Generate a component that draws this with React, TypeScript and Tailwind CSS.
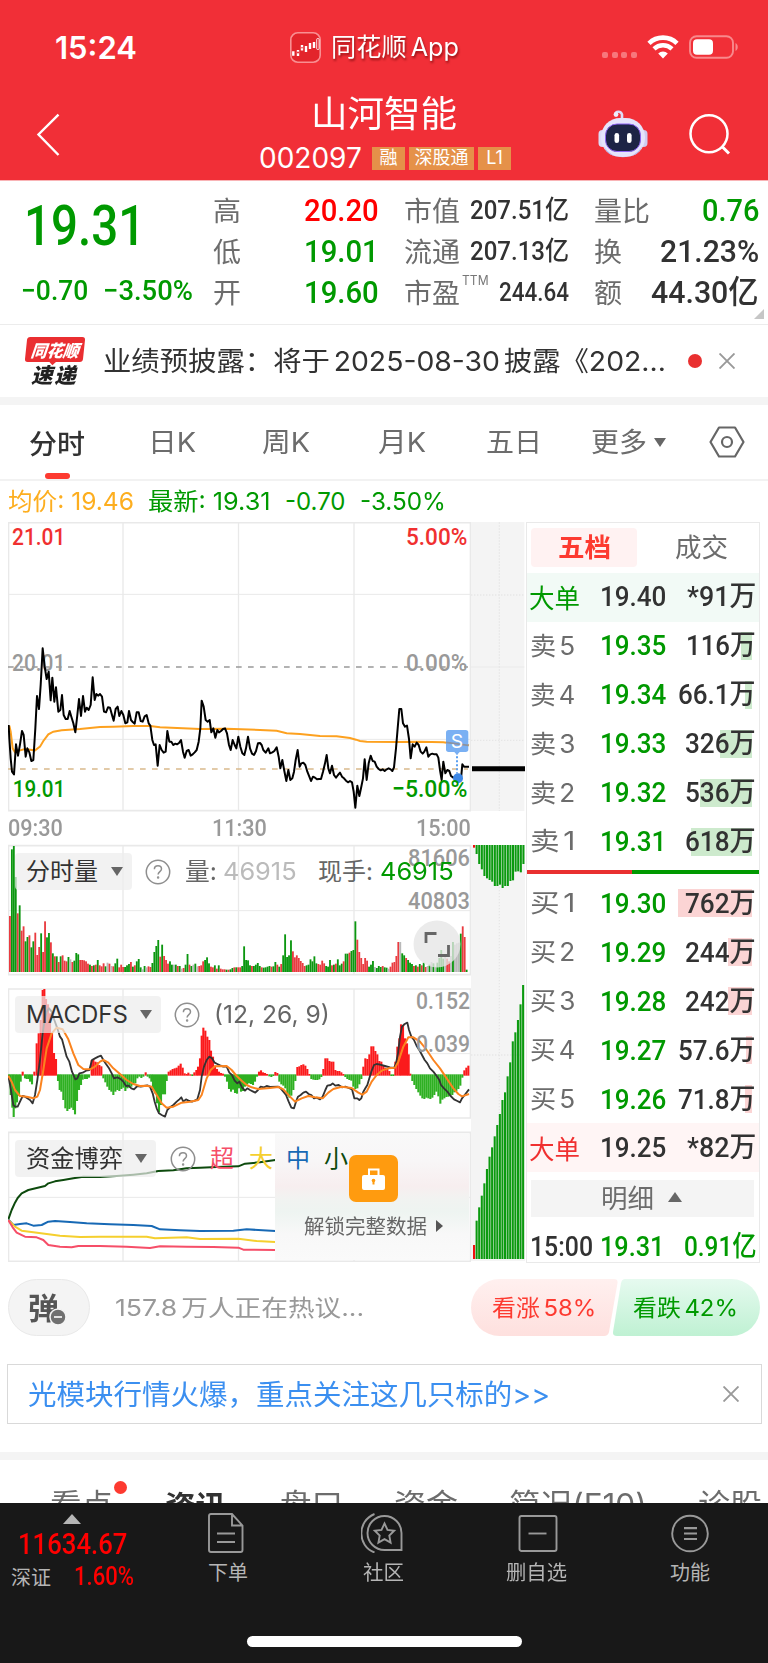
import { useLayoutEffect, useRef, type ReactNode } from 'react';

/* Text stretched or squeezed horizontally to the width of its box. */
function Fit({ className = '', children }: { className?: string; children: ReactNode }) {
  const outer = useRef<HTMLSpanElement>(null);
  const inner = useRef<HTMLSpanElement>(null);
  useLayoutEffect(() => {
    if (!outer.current || !inner.current) return;
    const ratio = outer.current.clientWidth / inner.current.offsetWidth;
    inner.current.style.transform = `scaleX(${ratio})`;
  }, []);
  return (
    <span ref={outer} className={'block shrink-0 whitespace-nowrap leading-none ' + className}>
      <span ref={inner} className="inline-block origin-left whitespace-pre">{children}</span>
    </span>
  );
}

const DIN = "font-['Roboto','Noto_Sans_CJK_SC',sans-serif] font-medium ";

const PRICE =
  '26,630 28,670 32,730 36,770 42,778 48,688 54,722 60,688 66,648 71,660 77,725 82,700 88,712 94,738 100,735 106,640 111,543 117,582 122,510 128,400 134,455 140,492 146,470 152,556 157,488 163,560 168,517 175,590 181,585 186,540 191,600 197,612 203,612 209,588 214,605 220,625 226,652 232,600 237,552 243,603 249,543 255,590 260,578 266,585 272,570 278,487 284,555 289,537 295,542 300,537 306,545 312,590 318,592 324,577 330,578 336,600 341,617 347,582 353,575 358,603 364,588 370,600 376,625 382,622 387,588 393,615 399,622 404,626 410,592 416,592 422,618 428,620 434,604 440,600 446,625 451,632 457,675 462,690 467,688 473,752 479,690 485,705 491,713 497,710 502,648 508,680 514,680 520,690 526,686 531,688 537,684 543,675 549,710 554,728 560,708 566,705 572,722 578,718 584,712 590,705 596,680 601,640 605,557 611,575 617,615 623,620 629,615 634,652 640,640 646,668 652,645 657,652 663,648 669,642 675,640 681,655 687,690 692,705 698,675 704,690 709,700 715,665 721,695 727,715 733,720 738,700 744,665 750,700 756,716 762,720 768,708 774,685 780,684 785,690 790,705 797,713 805,700 810,715 817,712 823,708 830,697 836,725 841,760 847,735 853,768 859,798 865,765 871,795 877,790 882,770 887,735 893,705 899,755 904,745 910,743 916,750 922,770 928,785 933,798 939,785 945,788 951,793 957,792 963,792 969,770 975,745 980,720 985,760 990,775 996,752 1002,780 1008,788 1014,780 1020,773 1026,785 1032,790 1038,797 1044,802 1050,798 1056,802 1061,830 1066,878 1072,812 1078,843 1083,820 1089,790 1094,733 1100,795 1106,745 1112,722 1118,738 1124,740 1130,755 1136,762 1142,766 1148,763 1154,768 1160,763 1166,760 1172,763 1177,768 1182,757 1188,700 1193,640 1198,582 1204,582 1209,625 1215,635 1221,632 1227,672 1232,730 1238,688 1244,695 1250,683 1256,690 1262,710 1268,716 1273,710 1279,697 1285,725 1291,718 1297,716 1303,718 1310,718 1315,728 1320,765 1325,795 1330,740 1336,775 1342,765 1348,768 1353,783 1360,788 1366,787 1375,790 1383,792 1387,748 1392,755 1400,755 1407,755';
const AVERAGE =
  '28,632 32,650 38,700 45,712 60,706 75,702 90,704 105,706 120,695 130,678 145,658 160,650 185,646 240,642 300,636 340,635 400,633 450,633 480,637 600,642 680,641 780,645 830,647 860,655 900,657 960,663 1010,664 1050,669 1068,674 1080,678 1100,680 1190,681 1260,680 1330,682 1360,686 1407,691';

/* One entry per minute: bar height and colour (r up, g down, n flat). */
const VOLUME =
  '168r 368g 378g 285g 176r 200g 124r 137r 92g 105g 110r 74g 92g 118r 51r 75r 116g 60r 152r 104g 117g 89r 56g 47r 47g 30r 47g 50r 34r 32r 45g 38n 30r 34g 57g 53g 36r 36r 35r 32r 25r 22g 18r 20g 22r 36g 20r 17r 26r 17g 28n 25r 18n 17r 26g 40g 14r 22r 15r 15g 20g 24g 30r 16g 20r 32g 39g 14g 8n 18g 14n 17r 15r 27g 60g 78g 96g 46r 82g 48r 36r 25r 32g 22g 22n 22g 18r 18g 10n 12r 22g 54g 22r 18g 22n 25g 17n 18r 20r 32r 36g 44g 26g 16r 14r 20g 10r 20g 10r 8r 8r 7g 7r 8g 12g 14r 14g 14r 14r 18g 77g 36g 35g 20g 18r 18g 22g 27g 18g 14r 13g 14g 16g 18g 16r 17g 30g 22r 16g 24r 50g 113g 45g 50g 95g 62r 44r 50r 42r 33r 27r 18r 20g 22g 38g 32g 47g 26g 24r 22r 34r 26r 18g 16g 36g 20r 22g 25r 38g 20g 25g 32r 55g 55g 58r 63g 66g 152g 97r 60r 42r 24r 42r 34r 16g 22g 33g 15n 12g 18g 15g 18r 14g 13g 10n 16r 28r 30r 48r 90r 90n 56g 50g 42r 36g 28g 24g 18r 20g 16r 24g 20r 28g 15r 18n 22g 30n 26g 16n 28g 42g 66g 40g 50n 40r 32r 48n 90g 82n 86n 88n 115g 137r 105r 7g';
const VOLUME_BARS = VOLUME.split(' ').map((v) => ({ h: parseInt(v, 10), c: v.slice(-1) }));
const FILL: Record<string, string> = { r: '#e93b40', g: '#0b960f', n: '#b9b9b9' };

const MACD =
  '27:-8 32:-60 37:-98 41:-126 46:-100 51:-82 57:-62 62:-20 68:10 75:-10 80:-12 85:-12 90:-20 96:-28 103:10 110:95 116:125 122:165 128:255 133:258 138:228 144:212 150:185 156:125 162:66 168:48 174:-18 179:-45 184:-50 190:-75 196:-100 202:-108 208:-102 214:-98 220:-105 225:-118 231:-78 237:-45 243:-30 248:-14 255:-12 261:-12 267:-8 275:45 280:48 286:40 292:38 298:30 304:26 310:-10 316:-22 322:-35 328:-45 334:-50 340:-60 346:-50 352:-45 358:-48 364:-42 370:-38 376:-48 382:-40 388:-38 394:-35 400:-30 406:-25 412:-10 418:-5 424:-9 430:-5 437:8 443:-5 449:-10 454:-20 459:-45 465:-55 471:-85 477:-112 483:-90 489:-58 495:-58 500:-18 506:10 512:14 518:18 524:20 530:22 536:28 542:34 548:22 554:5 560:3 565:7 571:2 577:-3 583:8 589:15 594:25 600:50 605:118 610:142 616:133 622:115 628:105 633:73 639:55 645:28 651:18 657:10 663:6 669:4 675:-5 681:-20 687:-42 693:-50 699:-44 705:-54 711:-56 717:-40 723:-50 729:-48 735:-35 741:-28 747:-25 753:-27 759:-30 765:-20 771:-5 777:10 783:14 789:8 795:6 801:3 808:-4 814:-6 820:-3 826:9 832:6 838:-20 844:-28 850:-32 856:-40 862:-62 868:-68 874:-62 880:-45 886:-18 892:24 898:26 904:30 910:32 916:28 922:18 928:3 934:-12 940:-14 946:-15 952:-15 958:-13 964:-6 970:18 976:50 982:50 988:42 994:40 1000:40 1006:15 1012:12 1018:12 1024:8 1030:3 1036:-6 1042:-12 1048:-15 1054:-17 1060:-35 1066:-42 1072:-40 1078:-28 1084:-12 1090:25 1096:50 1102:48 1108:62 1114:86 1120:86 1126:72 1132:62 1138:42 1144:40 1150:28 1156:22 1162:18 1168:12 1174:-3 1180:-3 1186:40 1192:85 1198:110 1203:152 1209:150 1215:110 1221:95 1226:62 1231:4 1237:-18 1243:-30 1249:-42 1255:-52 1261:-62 1267:-70 1273:-72 1279:-68 1285:-70 1291:-72 1297:-68 1303:-60 1309:-50 1315:-64 1321:-86 1327:-74 1333:-70 1339:-66 1345:-65 1351:-62 1357:-60 1363:-52 1369:-48 1375:-42 1381:-32 1387:-8 1393:14 1399:22 1405:28';
const MACD_BARS = MACD.split(' ').map((v) => v.split(':').map(Number));
const DIF =
  '25,707 32,745 40,795 45,800 53,800 60,785 68,768 75,770 82,775 90,780 98,790 105,765 112,720 120,660 128,580 134,540 140,515 147,505 155,515 163,540 172,565 180,590 186,598 192,620 200,650 208,665 216,695 226,718 232,715 238,700 248,698 258,692 268,690 276,660 285,655 295,650 303,647 310,660 318,672 326,683 334,698 342,715 352,712 362,717 370,725 378,738 386,737 394,745 402,748 412,738 422,740 432,738 442,736 450,740 458,760 464,785 470,805 477,820 485,825 495,830 502,810 512,800 520,795 530,785 538,778 544,772 550,785 558,778 568,783 576,785 584,782 592,778 600,750 605,710 612,680 620,660 628,650 636,655 644,668 652,672 660,676 670,680 680,680 688,698 696,705 704,722 712,730 718,725 726,742 735,752 742,745 750,750 758,754 766,758 774,750 782,740 792,742 800,738 810,741 835,740 842,745 850,755 858,765 866,785 874,803 882,805 888,785 894,770 902,765 910,758 918,755 926,762 934,765 942,775 950,773 960,778 968,770 976,750 982,737 992,735 998,730 1006,737 1016,735 1026,742 1036,740 1046,744 1056,748 1063,775 1072,775 1078,780 1084,775 1090,755 1096,745 1102,735 1108,715 1114,695 1122,675 1130,672 1140,674 1155,678 1170,682 1182,684 1188,670 1194,640 1200,590 1206,560 1214,552 1222,548 1227,570 1234,590 1242,600 1250,618 1258,630 1266,645 1274,660 1282,670 1290,685 1300,695 1310,708 1318,720 1323,735 1332,745 1342,755 1352,768 1362,778 1372,783 1380,787 1386,775 1394,765 1407,748';
const DEA =
  '25,707 35,725 45,750 60,768 80,770 100,775 112,770 120,750 130,690 140,625 155,580 170,563 188,568 205,598 220,640 235,675 250,687 270,688 285,680 300,665 310,660 325,668 340,685 360,702 380,720 400,732 420,738 440,737 455,740 470,765 485,790 500,803 520,800 545,788 570,785 595,780 605,765 620,715 632,690 645,679 680,678 695,690 710,708 725,722 740,735 755,742 775,747 810,744 835,741 850,748 870,770 885,785 905,775 925,768 945,772 968,775 985,758 1000,747 1025,740 1055,744 1075,758 1087,764 1100,755 1115,725 1130,705 1145,692 1165,685 1185,683 1195,665 1210,620 1225,592 1240,592 1260,605 1280,630 1300,660 1320,685 1340,715 1360,745 1375,762 1386,769 1407,762';

const FUNDS: [string, string][] = [
  ['#0d4a0d', '25,1138 35,1110 45,1088 53,1074 65,1060 85,1050 110,1044 135,1038 145,1030 165,1024 190,1020 220,1015 250,1010 300,1011 350,1008 400,1004 440,1000 475,993 520,991 560,985 600,983 650,981 715,979 735,971 780,967 800,964 826,960'],
  ['#1769b5', '25,1138 40,1155 60,1152 80,1150 100,1157 125,1155 145,1145 165,1143 210,1146 260,1150 330,1153 400,1155 455,1158 480,1168 540,1171 600,1173 700,1172 740,1168 826,1173'],
  ['#f5cf2e', '25,1140 45,1160 65,1172 100,1177 140,1182 180,1187 240,1191 300,1190 440,1190 465,1195 560,1192 600,1197 715,1196 770,1203 826,1206'],
  ['#f64e68', '25,1140 38,1162 50,1178 75,1190 110,1192 130,1200 145,1215 180,1220 215,1222 235,1218 300,1218 380,1220 450,1224 480,1219 560,1220 640,1221 715,1223 730,1229 826,1230'],
];

const STRIP_TOP = [8, 27, 57, 73, 93, 100, 105, 110, 123, 123, 119, 129, 123, 123, 108, 106, 80, 79, 82, 57];
const STRIP_BOTTOM = [42, 115, 155, 190, 227, 270, 307, 335, 368, 402, 435, 477, 500, 548, 590, 653, 680, 717, 764, 822];

/* Border and grid lines of a chart panel; drawn at three units to the pixel. */
function Grid({ top, mid, bottom }: { top: number; mid: number[]; bottom: number }) {
  return (
    <g stroke="#e9e9e9" strokeWidth={4} fill="none">
      <path d={`M25.5 ${top}H1411.5V${bottom}H25.5Z`} strokeWidth={5} />
      <path d={`M369 ${top}V${bottom}M715.5 ${top}V${bottom}M1062 ${top}V${bottom}`} />
      {mid.map((y) => <path key={y} d={`M24 ${y}H1413`} strokeWidth={3} />)}
    </g>
  );
}

function Axis({ x, y, w, fill = '#999', children }: { x: number; y: number; w: number; fill?: string; children: string }) {
  return (
    <text x={x} y={y} fill={fill} textLength={w} lengthAdjust="spacingAndGlyphs" className="font-['Roboto',sans-serif] text-[73px] font-medium">
      {children}
    </text>
  );
}

function Help({ className }: { className: string }) {
  return (
    <svg viewBox="0 0 26 26" className={'h-[26px] w-[26px] shrink-0 ' + className} fill="none" stroke="#8e8e8e" strokeWidth="1.5">
      <circle cx="13" cy="13" r="11.7" />
      <path d="M9.4 10.2c0-2 1.6-3.4 3.6-3.4s3.5 1.3 3.5 3.2c0 2.5-3.4 2.7-3.4 5.4" />
      <circle cx="13.1" cy="18.6" r=".5" fill="#8e8e8e" />
    </svg>
  );
}

function Down({ className = '' }: { className?: string }) {
  return (
    <svg viewBox="0 0 12 9" className={'h-[9px] w-3 shrink-0 ' + className}>
      <path d="M0 0h12L6 9z" fill="#666" />
    </svg>
  );
}

function Cross({ className = '' }: { className?: string }) {
  return (
    <svg viewBox="0 0 16 16" className={'h-4 w-4 shrink-0 ' + className} stroke="#999" strokeWidth="1.9">
      <path d="M.5.5l15 15M15.5.5l-15 15" />
    </svg>
  );
}

function Header() {
  return (
    <header className="h-[181px] border-b border-[#f9b4b6] bg-[#f12f37] text-white">
      <div className="flex h-[94px] items-center">
        <Fit className="ml-[55px] w-[82px] font-['Inter',sans-serif] text-[31px] font-semibold">15:24</Fit>
        <svg viewBox="0 0 31 31" className="ml-[153px] h-[31px] w-[31px]">
          <rect x=".8" y=".8" width="29.4" height="29.4" rx="7" fill="#e3242b" stroke="#f98f92" strokeWidth="1.6" />
          <path d="M3.300 19.300v4.500M8 18v6M12 13v5.500M16 14v6M20 11v6M24 10v6" stroke="#fff" strokeWidth="2.400" />
          <circle cx="8" cy="20.500" r="1" fill="#e3242b" />
          <circle cx="12" cy="15.700" r=".8" fill="#e3242b" />
          <rect x="26.700" y="6.500" width="2.400" height="11" rx="1" fill="none" stroke="#fff" strokeWidth=".9" />
        </svg>
        <Fit className="ml-[10px] w-[128px] font-['Inter','Noto_Sans_CJK_SC',sans-serif] text-[25px] drop-shadow-[1px_2px_1px_rgba(90,0,0,0.6)] [word-spacing:-3px]">同花顺 App</Fit>
        <div className="ml-[143px] mt-4 flex gap-[3.500px]">
          {[0, 1, 2, 3].map((i) => <i key={i} className="h-[6px] w-[6px] rounded-[2px] bg-[#f7777c]" />)}
        </div>
        <svg viewBox="0 0 32 24" className="ml-[10px] h-6 w-8" fill="none" stroke="#fff">
          <path d="M2 8.300a20 20 0 0 1 28 0" strokeWidth="4.600" />
          <path d="M7 13.800a13 13 0 0 1 18 0" strokeWidth="4.400" />
          <path d="M16 23.500l-4.800-5.100a7 7 0 0 1 9.600 0z" fill="#fff" stroke="none" />
        </svg>
        <svg viewBox="0 0 50 24" className="ml-[10px] h-6 w-[50px]">
          <rect x="1" y="1.200" width="43" height="21.600" rx="6.500" fill="none" stroke="#f8898c" strokeWidth="1.900" />
          <rect x="4" y="4.200" width="20" height="15.600" rx="4" fill="#fff" />
          <path d="M46.500 8v8c3-1.500 3-6.500 0-8z" fill="#f8898c" />
        </svg>
      </div>
      <div className="flex h-[86px]">
        <svg viewBox="0 0 24 44" className="ml-[36px] mt-[19px] h-11 w-6" fill="none" stroke="#fff" strokeWidth="2.400">
          <path d="M22.500 1.700L2.500 21.500l20 20.500" />
        </svg>
        <div className="ml-[199px] flex w-[253px] flex-col">
          <Fit className="-mt-px ml-[52px] h-[51px] w-[146px] font-['Noto_Sans_CJK_SC',sans-serif] text-[36px]">山河智能</Fit>
          <div className="flex items-center text-[18px]">
            <Fit className="w-[103px] font-['Inter',sans-serif] text-[28px]">002097</Fit>
            <div className="ml-[10px] flex h-[23px] gap-[4px] font-['Inter','Noto_Sans_CJK_SC',sans-serif]">
              <span className="flex w-[33px] items-center justify-center bg-[#e59149] leading-none">融</span>
              <span className="flex w-[65px] items-center justify-center bg-[#e59149] leading-none">深股通</span>
              <span className="flex w-[33px] items-center justify-center bg-[#e59149] leading-none">L1</span>
            </div>
          </div>
        </div>
        <svg viewBox="0 0 50 48" className="ml-[86px] mt-[16px] h-12 w-[50px]">
          <path d="M17.500 4.500c0-3.500 5.500-4 6.500 0v6" fill="none" stroke="#dedcf8" strokeWidth="2.600" />
          <circle cx="18" cy="4.500" r="2.400" fill="#eeeefc" />
          <rect x=".5" y="20" width="8" height="17" rx="4" fill="#dddbf6" />
          <rect x="41.500" y="20" width="8" height="17" rx="4" fill="#cfccf0" />
          <rect x="3" y="8" width="44" height="39" rx="19" fill="#e6e4fb" />
          <path d="M6 36c7 15 31 15 38 0-2 7-8 11-19 11S8 43 6 36z" fill="#aaa6e6" />
          <rect x="7.500" y="14" width="35" height="27.500" rx="11.500" fill="#1d2445" stroke="#8e63f2" strokeWidth="1" />
          <rect x="16.500" y="23" width="4.600" height="10" rx="2.300" fill="#fff" />
          <rect x="29" y="23" width="4.600" height="10" rx="2.300" fill="#fff" />
        </svg>
        <svg viewBox="0 0 42 42" className="ml-[41px] mt-[19px] h-[42px] w-[42px]" fill="none" stroke="#fff" strokeWidth="2.500">
          <circle cx="20" cy="20.700" r="18.500" />
          <path d="M33 33.500l7 7" strokeWidth="3" />
        </svg>
      </div>
    </header>
  );
}

function Quote() {
  const label = "font-['Noto_Sans_CJK_SC',sans-serif] text-[27px] text-[#6c6c6c] ";
  return (
    <section className="relative flex h-[144px] border-b border-[#ececec]">
      <div className="ml-[24px] w-[189px] pt-[18px]">
        <Fit className={DIN + 'w-[121px] text-[55px] text-[#009900]'}>19.31</Fit>
        <div className="mt-[23px] flex">
          <Fit className={DIN + 'ml-[-3px] w-[67px] text-[28px] text-[#009900]'}>−0.70</Fit>
          <Fit className={DIN + 'ml-[15px] w-[90px] text-[28px] text-[#009900]'}>−3.50%</Fit>
        </div>
      </div>
      <div className="w-[191px] pt-[8px]">
        {[['高', '20.20', 'text-[#ff0000]'], ['低', '19.01', 'text-[#009900]'], ['开', '19.60', 'text-[#009900]']].map(([a, b, c]) => (
          <div key={a} className="flex h-[41px] items-center">
            <Fit className={label + 'w-[28px]'}>{a}</Fit>
            <Fit className={DIN + 'ml-[63px] w-[75px] text-[32px] ' + c}>{b}</Fit>
          </div>
        ))}
      </div>
      <div className="w-[190px] pt-[8px]">
        <div className="flex h-[41px] items-center">
          <Fit className={label + 'w-[56px]'}>市值</Fit>
          <Fit className={DIN + 'ml-[10px] w-[99px] text-[26px] text-[#323232]'}>207.51亿</Fit>
        </div>
        <div className="flex h-[41px] items-center">
          <Fit className={label + 'w-[56px]'}>流通</Fit>
          <Fit className={DIN + 'ml-[10px] w-[99px] text-[26px] text-[#323232]'}>207.13亿</Fit>
        </div>
        <div className="flex h-[41px] items-center">
          <Fit className={label + 'w-[56px]'}>市盈</Fit>
          <Fit className="mb-[22px] ml-[2px] w-[27px] font-['Inter',sans-serif] text-[13px] text-[#777]">TTM</Fit>
          <Fit className={DIN + 'ml-[10px] w-[70px] text-[26px] text-[#323232]'}>244.64</Fit>
        </div>
      </div>
      <div className="w-[165px] pt-[8px]">
        <div className="flex h-[41px] items-center justify-between">
          <Fit className={label + 'w-[56px]'}>量比</Fit>
          <Fit className={DIN + 'w-[57px] text-[32px] text-[#009900]'}>0.76</Fit>
        </div>
        <div className="flex h-[41px] items-center justify-between">
          <Fit className={label + 'w-[28px]'}>换</Fit>
          <Fit className={DIN + 'w-[99px] text-[32px] text-[#323232]'}>21.23%</Fit>
        </div>
        <div className="flex h-[41px] items-center justify-between">
          <Fit className={label + 'w-[28px]'}>额</Fit>
          <Fit className={DIN + 'w-[108px] text-[32px] text-[#323232]'}>44.30亿</Fit>
        </div>
      </div>
      <svg viewBox="0 0 10 10" className="absolute bottom-[5px] right-[4px] h-[10px] w-[10px]"><path d="M10 0v10H0z" fill="#c6c6c6" /></svg>
    </section>
  );
}

function News() {
  return (
    <section className="flex h-[80px] items-center border-b-[8px] border-[#f4f4f4]">
      <div className="ml-[24px] flex w-[62px] flex-col items-center font-['Noto_Sans_CJK_SC',sans-serif] font-black italic">
        <div className="relative flex h-[25px] w-[58px] -skew-x-6 items-center justify-center rounded-[3px] bg-[#ea2e31] leading-none text-white">
          <Fit className="w-[48px] text-[17px]">同花顺</Fit>
          <i className="absolute -bottom-[2px] left-[25px] h-[6px] w-[6px] rotate-45 bg-[#ea2e31]" />
        </div>
        <Fit className="mr-[3px] mt-[2px] w-[45px] text-[21px] text-[#222] [word-spacing:-3px]">速 递</Fit>
      </div>
      <Fit className="ml-[17px] w-[563px] font-['Inter','Noto_Sans_CJK_SC',sans-serif] text-[27px] text-[#323232] [word-spacing:-4px]">业绩预披露：将于 2025-08-30 披露《202...</Fit>
      <i className="ml-[22px] h-[14px] w-[14px] rounded-full bg-[#e93030]" />
      <Cross className="ml-[17px]" />
    </section>
  );
}

function Tabs() {
  const t = "font-['Inter','Noto_Sans_CJK_SC',sans-serif] text-[27px] text-[#6c6c6c] ";
  return (
    <nav className="relative flex h-[76px] items-center border-b-[2px] border-[#f2f2f2]">
      <Fit className="ml-[29px] w-[56px] font-['Noto_Sans_CJK_SC',sans-serif] text-[27px] font-medium text-[#323232]">分时</Fit>
      <Fit className={t + 'ml-[63px] w-[48px]'}>日K</Fit>
      <Fit className={t + 'ml-[66px] w-[48px]'}>周K</Fit>
      <Fit className={t + 'ml-[68px] w-[48px]'}>月K</Fit>
      <Fit className={t + 'ml-[60px] w-[56px]'}>五日</Fit>
      <Fit className={t + 'ml-[49px] w-[56px]'}>更多</Fit>
      <Down className="ml-[7px]" />
      <svg viewBox="0 0 36 32" className="ml-[43px] h-8 w-9" fill="none" stroke="#666" strokeWidth="2.200">
        <path d="M10 1.500h16L34.500 16 26 30.500H10L1.500 16z" strokeLinejoin="round" />
        <circle cx="18" cy="16" r="5" />
      </svg>
      <i className="absolute bottom-0 left-[45px] h-[6px] w-[25px] rounded-[3px] bg-[#fd3a30]" />
    </nav>
  );
}

function Legend() {
  const t = "font-['Inter','Noto_Sans_CJK_SC',sans-serif] text-[24px] ";
  return (
    <div className="flex h-[41px] items-center pt-px">
      <Fit className={t + 'ml-[8px] w-[126px] text-[#fdae1f]'}>均价: 19.46</Fit>
      <Fit className={t + 'ml-[14px] w-[123px] text-[#009900]'}>最新: 19.31</Fit>
      <Fit className={t + 'ml-[14px] w-[61px] text-[#009900]'}>-0.70</Fit>
      <Fit className={t + 'ml-[14px] w-[86px] text-[#009900]'}>-3.50%</Fit>
    </div>
  );
}

function Picker({ className, text, children }: { className: string; text: string; children: string }) {
  return (
    <div className={'flex h-[37px] shrink-0 items-center justify-between rounded-[4px] bg-[#ededed]/70 pl-[11px] pr-[9px] ' + className}>
      <Fit className={"font-['Inter','Noto_Sans_CJK_SC',sans-serif] text-[24px] text-[#323232] " + text}>{children}</Fit>
      <Down />
    </div>
  );
}

function Charts() {
  const t = "font-['Inter','Noto_Sans_CJK_SC',sans-serif] text-[24px] ";
  return (
    <div className="flex w-[463px] flex-col">
      <svg viewBox="24 21 1389 870" className="h-[290px] w-[463px]">
        <Grid top={23} mid={[238, 673]} bottom={887} />
        <path d="M24 456H1404" stroke="#999" strokeWidth="4" strokeDasharray="17 19" />
        <path d="M24 762H1404" stroke="#d9b98c" strokeWidth="4" strokeDasharray="17 19" />
        <Axis x={36} y={91} w={160} fill="#f03030">21.01</Axis>
        <Axis x={36} y={468} w={160}>20.01</Axis>
        <Axis x={38} y={847} w={158} fill="#009900">19.01</Axis>
        <Axis x={1218} y={91} w={184} fill="#f03030">5.00%</Axis>
        <Axis x={1218} y={468} w={184}>0.00%</Axis>
        <polyline points={AVERAGE} fill="none" stroke="#fda11f" strokeWidth="6" />
        <polyline points={PRICE} fill="none" stroke="#000" strokeWidth="6" strokeLinejoin="round" />
        <path d="M1371 712V775" stroke="#5a9ff0" strokeWidth="6" strokeDasharray="6 6" />
        <circle cx="1374" cy="790" r="15" fill="#3d87e6" />
        <Axis x={1176} y={847} w={226} fill="#009900">−5.00%</Axis>
        <rect x="1338" y="645" width="67" height="66" rx="8" fill="#7ab0f3" />
        <path d="M1361 709h20l-10 11z" fill="#7ab0f3" />
        <path d="M1338 682L1405 691" stroke="#8c93a0" strokeWidth="5" />
        <text x="1371" y="699" textAnchor="middle" fill="#fff" className="font-['Inter',sans-serif] text-[58px]">S</text>
      </svg>
      <div className="flex h-[32px] items-center justify-between">
        <Fit className={DIN + 'w-[55px] text-[24px] text-[#999]'}>09:30</Fit>
        <Fit className={DIN + 'w-[55px] text-[24px] text-[#999]'}>11:30</Fit>
        <Fit className={DIN + 'w-[55px] text-[24px] text-[#999]'}>15:00</Fit>
      </div>
      <div className="relative h-[132px]">
        <svg viewBox="24 12 1389 396" className="h-[132px] w-[463px]">
          <Grid top={17} mid={[212]} bottom={404} />
          {VOLUME_BARS.map((b, i) => (
            <rect key={i} x={27 + i * (1376 / VOLUME_BARS.length)} y={396 - b.h} width={5.5} height={b.h} fill={FILL[b.c]} />
          ))}
          <Axis x={1224} y={77} w={186}>81606</Axis>
          <Axis x={1224} y={206} w={186}>40803</Axis>
        </svg>
        <div className="absolute inset-x-0 top-[9px] flex items-center">
          <Picker className="ml-[7px] w-[117px]" text="w-[72px]">分时量</Picker>
          <Help className="ml-[13px]" />
          <Fit className={t + 'ml-[14px] w-[32px] text-[#666]'}>量:</Fit>
          <Fit className={t + 'ml-[6px] w-[74px] text-[#bbb]'}>46915</Fit>
          <Fit className={t + 'ml-[21px] w-[55px] text-[#666]'}>现手:</Fit>
          <Fit className={t + 'ml-[7px] w-[74px] text-[#009900]'}>46915</Fit>
        </div>
        <svg viewBox="0 0 48 48" className="absolute left-[405px] top-[76px] h-12 w-12" fill="none" stroke="#666" strokeWidth="2.800">
          <circle cx="24" cy="24" r="23.500" fill="#e5e5e5" fillOpacity=".78" stroke="none" />
          <path d="M13 23V13.500h10.500M25 35.500h10.500V25" />
        </svg>
      </div>
      <div className="relative mt-[11px] h-[132px]">
        <svg viewBox="24 441 1389 396" className="h-[132px] w-[463px]">
          <Grid top={447} mid={[641]} bottom={834} />
          {MACD_BARS.map(([x, v]) => (
            <rect key={x} x={x - 3.1} y={v > 0 ? 708 - v - 3 : 703} width={6.3} height={Math.abs(v) + 2} fill={v > 0 ? '#fb1a1c' : '#2eb022'} />
          ))}
          <polyline points={DIF} fill="none" stroke="#333" strokeWidth="5.500" strokeLinejoin="round" />
          <polyline points={DEA} fill="none" stroke="#fb841f" strokeWidth="6" strokeLinejoin="round" />
          <Axis x={1248} y={507} w={162}>0.152</Axis>
          <Axis x={1248} y={636} w={162}>0.039</Axis>
        </svg>
        <div className="absolute inset-x-0 top-[9px] flex items-center">
          <Picker className="ml-[7px] w-[146px]" text="w-[102px]">MACDFS</Picker>
          <Help className="ml-[13px]" />
          <Fit className={t + 'ml-[14px] w-[116px] text-[#666]'}>(12, 26, 9)</Fit>
        </div>
      </div>
      <div className="relative mt-[11px] h-[132px]">
        <svg viewBox="24 870 1389 396" className="h-[132px] w-[463px]">
          <Grid top={877} mid={[1072]} bottom={1264} />
          {FUNDS.map(([c, p]) => <polyline key={c} points={p} fill="none" stroke={c} strokeWidth="6" strokeLinejoin="round" />)}
        </svg>
        <div className="absolute bottom-[2px] left-[267px] top-[3px] w-[194px] bg-[linear-gradient(180deg,#f9f9f9_0%,#f8f6f7_22%,#f7eeef_42%,#f1f3f1_52%,#eef4f1_62%,#f8f8f8_80%,#fafafa_100%)]" />
        <div className="absolute inset-x-0 top-[10px] flex items-center">
          <Picker className="ml-[7px] w-[141px]" text="w-[97px]">资金博弈</Picker>
          <Help className="ml-[14px]" />
          <Fit className={t + 'ml-[14px] w-[24px] text-[#f64e68]'}>超</Fit>
          <Fit className={t + 'ml-[15px] w-[24px] text-[#f5cf2e]'}>大</Fit>
          <Fit className={t + 'ml-[13px] w-[24px] text-[#1769b5]'}>中</Fit>
          <Fit className={t + 'ml-[14px] w-[24px] text-[#0d4a0d]'}>小</Fit>
        </div>
        <div className="absolute left-[296px] top-[25px] flex w-[142px] flex-col">
          <svg viewBox="0 0 49 47" className="ml-[45px] h-[47px] w-[49px]">
            <rect width="49" height="47" rx="7" fill="#ff9b0f" />
            <rect x="13" y="20" width="23" height="15" rx="2" fill="#fff" />
            <path d="M20 20v-5.500h9.500V20" fill="none" stroke="#fff" strokeWidth="2" />
            <path d="M24.500 24.500v5" stroke="#ff9b0f" strokeWidth="2" />
            <circle cx="24.500" cy="25.500" r="1.800" fill="#ff9b0f" />
          </svg>
          <div className="mt-[14px] flex items-center">
            <Fit className="w-[123px] font-['Noto_Sans_CJK_SC',sans-serif] text-[20px] text-[#666]">解锁完整数据</Fit>
            <svg viewBox="0 0 7 12" className="ml-[9px] h-3 w-[7px]"><path d="M0 0l7 6-7 6z" fill="#555" /></svg>
          </div>
        </div>
      </div>
    </div>
  );
}

function Strip() {
  return (
    <div className="flex w-[55px] flex-col">
      <svg viewBox="633 21 165 870" className="h-[290px] w-[55px]">
        <rect x="633" y="21" width="160" height="867" fill="#f4f4f4" />
        <path d="M633 456H793" stroke="#eaeaea" strokeWidth="3" />
        <path d="M718 22V888M633 240H793M633 676H793" stroke="#e6e6e6" strokeWidth="4" strokeDasharray="4 5" />
        <path d="M636 761H795" stroke="#000" strokeWidth="15" />
      </svg>
      <svg viewBox="633 15 165 1248" className="mt-[33px] h-[416px] w-[55px]">
        <rect x="633" y="15" width="162" height="1248" fill="#f4f4f4" />
        <path d="M718 15V1257M633 645H793" stroke="#e6e6e6" strokeWidth="4" strokeDasharray="4 5" />
        {STRIP_TOP.map((h, i) => <rect key={i} x={639 + i * 7.8} y={15} width={6.2} height={h} fill={i ? '#0b9a0f' : '#f01010'} />)}
        {STRIP_BOTTOM.map((h, i) => <rect key={i} x={639 + i * 7.75} y={1257 - h} width={6.2} height={h} fill={i ? '#0b9a0f' : '#f01010'} />)}
      </svg>
    </div>
  );
}

function Level({ side, price, qty, w, bar }: { side: string; price: string; qty: string; w: string; bar: string }) {
  return (
    <div className="relative flex h-[49px] items-center">
      <i className={'absolute right-[7px] top-[10px] h-[28px] ' + bar} />
      <Fit className="ml-[3px] w-[45px] font-['Inter','Noto_Sans_CJK_SC',sans-serif] text-[25px] text-[#6c6c6c] [word-spacing:-4px]">{side}</Fit>
      <Fit className={DIN + 'ml-[25px] w-[66px] text-[28px] text-[#009900]'}>{price}</Fit>
      <Fit className={DIN + 'relative ml-auto mr-[3px] text-[28px] text-[#323232] ' + w}>{qty}</Fit>
    </div>
  );
}

function BigOrder({ price, qty, tone, bg }: { price: string; qty: string; tone: string; bg: string }) {
  return (
    <div className={'flex h-[49px] items-center ' + bg}>
      <Fit className={"ml-[2px] w-[51px] font-['Noto_Sans_CJK_SC',sans-serif] text-[26px] " + tone}>大单</Fit>
      <Fit className={DIN + 'ml-[20px] w-[66px] text-[28px] text-[#323232]'}>{price}</Fit>
      <Fit className={DIN + 'ml-auto mr-[3px] w-[69px] text-[28px] text-[#323232]'}>{qty}</Fit>
    </div>
  );
}

function Book() {
  return (
    <div className="flex h-[741px] w-[234px] flex-col border border-[#e9e9e9]">
      <div className="flex h-[50px] items-center">
        <div className="ml-[4px] flex h-[39px] w-[106px] items-center justify-center rounded-[4px] bg-[#fff2f2]">
          <Fit className="-mt-[3px] w-[53px] font-['Noto_Sans_CJK_SC',sans-serif] text-[26px] font-bold text-[#fd3a30]">五档</Fit>
        </div>
        <Fit className="-mt-[3px] ml-[38px] w-[53px] font-['Noto_Sans_CJK_SC',sans-serif] text-[26px] text-[#6c6c6c]">成交</Fit>
      </div>
      <BigOrder price="19.40" qty="*91万" tone="text-[#009900]" bg="bg-[#f2faf6]" />
      <Level side="卖 5" price="19.35" qty="116万" w="w-[70px]" bar="w-[11px] bg-[#cdeacd]" />
      <Level side="卖 4" price="19.34" qty="66.1万" w="w-[78px]" bar="w-[7px] bg-[#cdeacd]" />
      <Level side="卖 3" price="19.33" qty="326万" w="w-[71px]" bar="w-[32px] bg-[#cdeacd]" />
      <Level side="卖 2" price="19.32" qty="536万" w="w-[71px]" bar="w-[52px] bg-[#cdeacd]" />
      <Level side="卖 1" price="19.31" qty="618万" w="w-[71px]" bar="w-[61px] bg-[#cdeacd]" />
      <div className="mb-[5px] mt-[4px] flex h-[4px]">
        <i className="w-[105px] bg-[#e93030]" />
        <i className="grow bg-[#009900]" />
      </div>
      <Level side="买 1" price="19.30" qty="762万" w="w-[71px]" bar="w-[74px] bg-[#fbd4d4]" />
      <Level side="买 2" price="19.29" qty="244万" w="w-[71px]" bar="w-[24px] bg-[#fbd4d4]" />
      <Level side="买 3" price="19.28" qty="242万" w="w-[71px]" bar="w-[24px] bg-[#fbd4d4]" />
      <Level side="买 4" price="19.27" qty="57.6万" w="w-[78px]" bar="w-[6px] bg-[#fbd4d4]" />
      <Level side="买 5" price="19.26" qty="71.8万" w="w-[78px]" bar="w-[7px] bg-[#fbd4d4]" />
      <div className="-mt-px">
        <BigOrder price="19.25" qty="*82万" tone="text-[#f03030]" bg="bg-[#fff5f5]" />
      </div>
      <div className="ml-[4px] mt-[8px] flex h-[37px] w-[223px] items-center bg-[#f4f4f4]">
        <Fit className="-mt-[3px] ml-[70px] w-[53px] font-['Noto_Sans_CJK_SC',sans-serif] text-[26px] text-[#6c6c6c]">明细</Fit>
        <svg viewBox="0 0 14 10" className="-mt-[3px] ml-[14px] h-[10px] w-[14px]"><path d="M7 0l7 10H0z" fill="#666" /></svg>
      </div>
      <div className="mt-[15px] flex h-[30px] items-center">
        <Fit className={DIN + 'ml-[3px] w-[63px] text-[28px] text-[#323232]'}>15:00</Fit>
        <Fit className={DIN + 'ml-[7px] w-[64px] text-[28px] text-[#009900]'}>19.31</Fit>
        <Fit className={DIN + 'ml-auto mr-[2px] w-[73px] text-[28px] text-[#009900]'}>0.91亿</Fit>
      </div>
    </div>
  );
}

function Discuss() {
  const t = "font-['Inter','Noto_Sans_CJK_SC',sans-serif] text-[23px] [word-spacing:-3px] ";
  return (
    <section className="relative mt-[16px] flex h-[57px] items-center">
      <div className="relative ml-[8px] flex h-[57px] w-[82px] items-center rounded-full border border-[#e9e9e9] bg-[#f4f4f4]">
        <Fit className="mb-[4px] ml-[19px] w-[31px] font-['Noto_Sans_CJK_SC',sans-serif] text-[30px] font-bold text-[#555]">弹</Fit>
        <svg viewBox="0 0 18 18" className="absolute left-[40px] top-[28px] h-[18px] w-[18px]">
          <circle cx="9" cy="9" r="8" fill="#707070" stroke="#f4f4f4" strokeWidth="1.500" />
          <path d="M5 9h8" stroke="#fff" strokeWidth="1.600" />
        </svg>
      </div>
      <Fit className={t + 'ml-[25px] mt-[2px] w-[249px] text-[#999]'}>157.8 万人正在热议...</Fit>
      <div className="relative ml-[107px] flex h-[57px] w-[289px]">
        <svg viewBox="0 0 289 57" className="absolute inset-0 h-[57px] w-[289px]">
          <defs>
            <linearGradient id="up" x1="0" y1="0" x2="0" y2="1"><stop stopColor="#fff0ef" /><stop offset="1" stopColor="#fee0de" /></linearGradient>
            <linearGradient id="down" x1="0" y1="0" x2="0" y2="1"><stop stopColor="#e6faef" /><stop offset="1" stopColor="#bff1d3" /></linearGradient>
          </defs>
          <path d="M28.500 0H143q4 0 3.500 4L138 53q-1 4-5 4H28.500a28.500 28.500 0 0 1 0-57z" fill="url(#up)" />
          <path d="M154 0h106.500a28.500 28.500 0 0 1 0 57H146q-4.500 0-4-4L150 4q1-4 4-4z" fill="url(#down)" />
        </svg>
        <div className="relative flex items-center pt-[2px]">
          <Fit className={t + 'ml-[21px] w-[104px] text-[#fd3a30]'}>看涨 58%</Fit>
          <Fit className={t + 'ml-[37px] w-[105px] text-[#009900]'}>看跌 42%</Fit>
        </div>
      </div>
    </section>
  );
}

function Bottom() {
  const label = "font-['Noto_Sans_CJK_SC',sans-serif] text-[20px] text-[#b5b5b5] ";
  const icon = { fill: 'none', stroke: '#999', strokeWidth: 1.9 };
  return (
    <footer className="relative h-[160px] bg-[#181818]">
      <div className="flex">
        <div className="w-[208px]">
          <svg viewBox="0 0 18 10" className="ml-[63px] mt-[11px] h-[10px] w-[18px]"><path d="M9 0l9 10H0z" fill="#b5b5b5" /></svg>
          <Fit className={DIN + 'ml-[18px] mt-[6px] w-[109px] text-[29px] text-[#ff0000]'}>11634.67</Fit>
          <div className="mt-[5px] flex items-center">
            <Fit className={label + 'ml-[11px] w-[40px]'}>深证</Fit>
            <Fit className={DIN + 'ml-[23px] w-[60px] text-[25px] text-[#ff0000]'}>1.60%</Fit>
          </div>
        </div>
        <div className="w-[154px] pt-[10px]">
          <svg viewBox="0 0 36 40" className="h-10 w-9" {...icon}>
            <path d="M1 3q0-2 2-2h21l10.500 11.500V37q0 2-2 2H3q-2 0-2-2zM24 1v11.500h10.500" />
            <path d="M9 20.500h18M9 29h18" />
          </svg>
          <Fit className={label + 'mt-[9px] w-[40px]'}>下单</Fit>
        </div>
        <div className="w-[144px] pt-[10px]">
          <svg viewBox="0 0 42 40" className="-ml-[1px] h-10 w-[42px]" {...icon}>
            <path d="M13.500 1C-4 8-4 33 13.500 39.500" />
            <path d="M40.500 37H23.500A17 17 0 1 1 40.500 20z" />
            <path d="M23.500 10.500l3 6.400 6.700.9-4.900 4.800 1.300 7-6.100-3.400-6.100 3.400 1.300-7-4.900-4.800 6.700-.9z" />
          </svg>
          <Fit className={label + 'ml-px mt-[9px] w-[41px]'}>社区</Fit>
        </div>
        <div className="w-[164px] pt-[10px]">
          <svg viewBox="0 0 40 40" className="ml-[12px] h-10 w-10" {...icon}>
            <rect x="1.500" y="3" width="37" height="35" rx="2" />
            <path d="M10.500 20.500h18" />
          </svg>
          <Fit className={label + 'mt-[9px] w-[61px]'}>删自选</Fit>
        </div>
        <div className="pt-[10px]">
          <svg viewBox="0 0 38 40" className="ml-[1px] h-10 w-[38px]" {...icon}>
            <circle cx="19" cy="20.500" r="17.800" />
            <path d="M13 15.200h13M13 20.500h13M13 26h13" strokeWidth="2.200" />
          </svg>
          <Fit className={label + 'mt-[9px] w-[40px]'}>功能</Fit>
        </div>
      </div>
      <i className="absolute bottom-[16px] left-[247px] h-[11px] w-[275px] rounded-full bg-white" />
    </footer>
  );
}

export default function App() {
  const t = "font-['Inter','Noto_Sans_CJK_SC',sans-serif] text-[30px] text-[#6c6c6c] ";
  return (
    <div className="flex h-[1663px] w-[768px] flex-col overflow-hidden bg-white [&>*]:shrink-0">
      <Header />
      <Quote />
      <News />
      <Tabs />
      <Legend />
      <main className="ml-[8px] flex h-[741px]">
        <Charts />
        <Strip />
        <Book />
      </main>
      <Discuss />
      <section className="ml-[7px] mt-[28px] flex h-[60px] w-[755px] items-center border border-[#d9d9d9]">
        <Fit className="ml-[20px] mt-[2px] w-[522px] font-['Inter','Noto_Sans_CJK_SC',sans-serif] text-[28px] text-[#3b8ff0]">光模块行情火爆，重点关注这几只标的&gt;&gt;</Fit>
        <Cross className="ml-[173px]" />
      </section>
      <div className="mt-[28px] h-[8px] bg-[#f4f4f4]" />
      <nav className="relative flex h-[43px] overflow-hidden pt-[29px]">
        <Fit className={t + 'ml-[50px] w-[63px]'}>看点</Fit>
        <Fit className="ml-[52px] w-[61px] font-['Noto_Sans_CJK_SC',sans-serif] text-[30px] font-bold text-[#323232]">资讯</Fit>
        <Fit className={t + 'ml-[54px] w-[63px]'}>盘口</Fit>
        <Fit className={t + 'ml-[51px] w-[64px]'}>资金</Fit>
        <Fit className={t + 'ml-[51px] w-[138px]'}>简况(F10)</Fit>
        <Fit className={t + 'ml-[51px] w-[64px]'}>诊股</Fit>
        <i className="absolute left-[114px] top-[21px] h-[13px] w-[13px] rounded-full bg-[#fd3a30]" />
      </nav>
      <Bottom />
    </div>
  );
}
